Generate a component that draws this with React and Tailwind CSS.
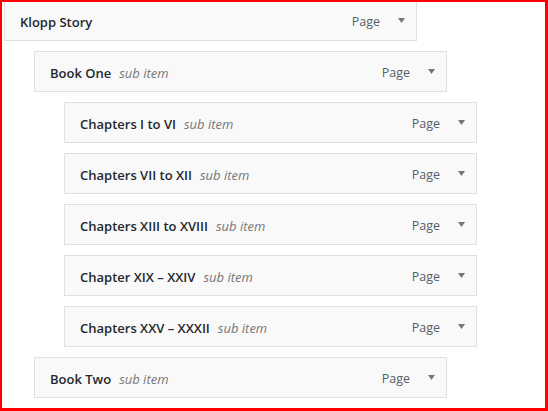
import React from "react";

const items = [
  { title: "Klopp Story", depth: 0, sub: false },
  { title: "Book One", depth: 1, sub: true },
  { title: "Chapters I to VI", depth: 2, sub: true },
  { title: "Chapters VII to XII", depth: 2, sub: true },
  { title: "Chapters XIII to XVIII", depth: 2, sub: true },
  { title: "Chapter XIX – XXIV", depth: 2, sub: true },
  { title: "Chapters XXV – XXXII", depth: 2, sub: true },
  { title: "Book Two", depth: 1, sub: true },
];

const indent = ["ml-0", "ml-[30px]", "ml-[60px]"];

function Row({ title, depth, sub }) {
  return (
    <div
      className={`${indent[depth]} flex h-[41px] w-[413px] items-center border border-[#e0e0e0] bg-[#f9f9f9] pl-[15px] pr-[11px] pt-[4px]`}
    >
      <span className="text-[13px] font-semibold text-[#23282d]">{title}</span>
      {sub && (
        <span className="ml-[8px] text-[13px] italic text-[#777777]">sub item</span>
      )}
      <span className="ml-auto text-[12.5px] text-[#555d66]">Page</span>
      <svg width="7" height="6" viewBox="0 0 7 6" className="ml-[18px] mb-[3px]">
        <path d="M0 0 L7 0 L3.5 5 Z" fill="#72777c" />
      </svg>
    </div>
  );
}

export default function App() {
  return (
    <div
      className="relative h-[411px] w-[548px] overflow-hidden bg-white"
      style={{ fontFamily: '"Open Sans", "Noto Sans", sans-serif' }}
    >
      <div className="flex flex-col gap-[10px] pl-[4px]">
        {items.map((it) => (
          <Row key={it.title} {...it} />
        ))}
      </div>
      <div className="pointer-events-none absolute inset-0 border-b-[3px] border-l-2 border-r-[3px] border-t-2 border-[#ff0000]" />
    </div>
  );
}
